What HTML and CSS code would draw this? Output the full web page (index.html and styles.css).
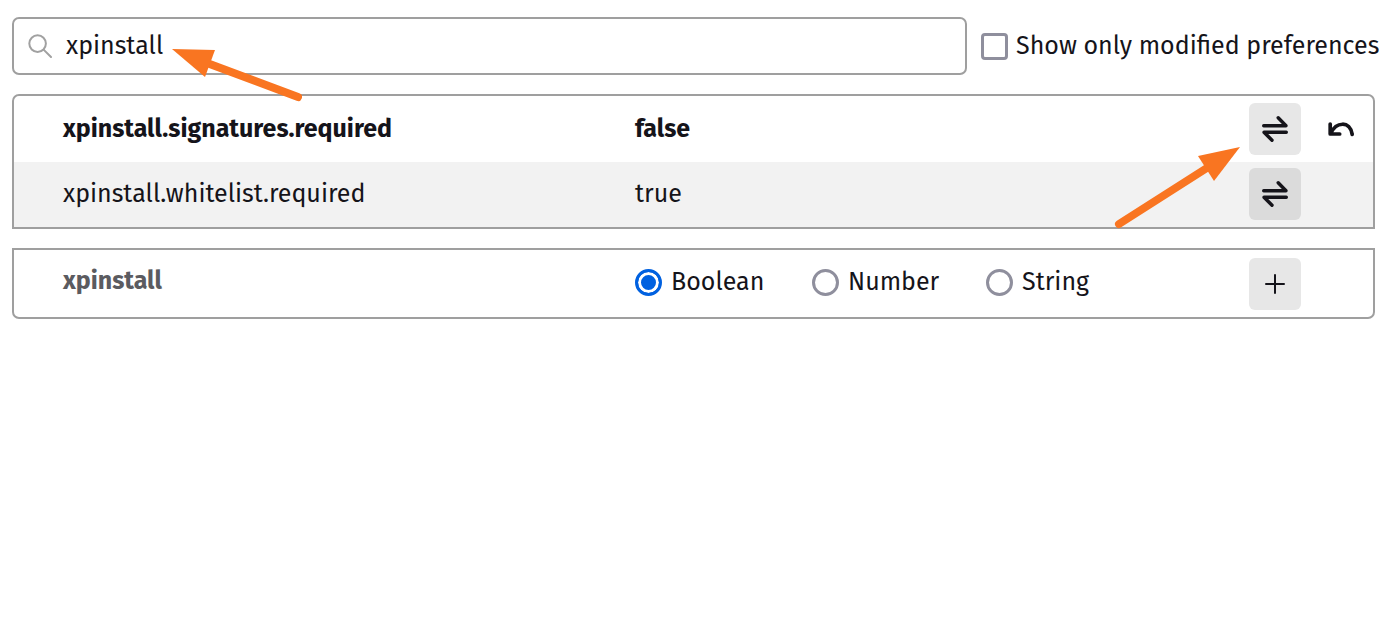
FILE: index.html
```html
<!DOCTYPE html>
<html lang="en">
<head>
<meta charset="utf-8">
<title>Advanced Preferences</title>
<link rel="stylesheet" href="styles.css">
</head>
<body>
<svg class="symbols" aria-hidden="true">
  <symbol id="toggle" viewBox="0 0 28 28">
    <path d="M2.7 10.8H25L17.2 2.8M25.3 17.2H3l8 8" fill="none" stroke="currentColor" stroke-width="3.4" stroke-linecap="round" stroke-linejoin="round"/>
  </symbol>
</svg>
<main class="page">
  <div class="toolbar">
    <div class="search">
      <svg class="search-icon" viewBox="0 0 24 24" aria-hidden="true"><circle cx="9.6" cy="9.6" r="8.3"/><path d="M15.6 15.6L23 23"/></svg>
      <input class="search-input" type="text" value="xpinstall" aria-label="Search preference name">
    </div>
    <label class="modified"><input class="checkbox" type="checkbox"><span>Show only modified preferences</span></label>
  </div>

  <table class="prefs results">
    <colgroup><col class="col-name"><col><col class="col-edit"><col class="col-reset"></colgroup>
    <tbody>
      <tr class="changed">
        <th scope="row">xpinstall.signatures.required</th>
        <td>false</td>
        <td><button class="action" aria-label="Toggle"><svg class="toggle-icon"><use href="#toggle"/></svg></button></td>
        <td><button class="action plain" aria-label="Reset"><svg class="reset-icon" viewBox="0 0 26 14"><path d="M2.2 2v10h9.5M2.8 11.4C8-.4 22-1.6 24.2 12.4"/></svg></button></td>
      </tr>
      <tr class="shaded">
        <th scope="row">xpinstall.whitelist.required</th>
        <td>true</td>
        <td><button class="action" aria-label="Toggle"><svg class="toggle-icon"><use href="#toggle"/></svg></button></td>
        <td></td>
      </tr>
    </tbody>
  </table>

  <table class="prefs new">
    <colgroup><col class="col-name"><col><col class="col-edit"><col class="col-reset"></colgroup>
    <tbody>
      <tr>
        <th scope="row">xpinstall</th>
        <td class="type-cell">
          <div class="types">
            <label class="type"><input class="radio" type="radio" name="type" checked><span>Boolean</span></label>
            <label class="type"><input class="radio" type="radio" name="type"><span>Number</span></label>
            <label class="type"><input class="radio" type="radio" name="type"><span>String</span></label>
          </div>
        </td>
        <td><button class="action" aria-label="Add"><svg class="add-icon" viewBox="0 0 20 20"><path d="M10 1v18M1 10h18"/></svg></button></td>
        <td></td>
      </tr>
    </tbody>
  </table>

  <svg class="pointer pointer-search" viewBox="0 0 130 56" aria-hidden="true"><path class="shaft" d="M35 17L126 51"/><path class="head" d="M0 3L43 4L33 31Z"/></svg>
  <svg class="pointer pointer-toggle" viewBox="0 0 126 84" aria-hidden="true"><path class="shaft" d="M5 78L96 20"/><path class="head" d="M126 1L84 10L100 35Z"/></svg>
</main>
</body>
</html>
```
FILE: styles.css
```css
* { box-sizing: border-box; }
body {
  margin: 0;
  background: #fff;
  color: #15141a;
  font: 25px/32px "Fira Sans", "Noto Sans", sans-serif;
}
.symbols { position: absolute; width: 0; height: 0; }
.page { position: relative; padding: 17px 16px 17px 12px; }
.toolbar { display: flex; align-items: center; gap: 14px; margin-bottom: 19px; }
.search {
  flex: 1;
  display: flex;
  align-items: center;
  gap: 14px;
  height: 58px;
  padding: 0 14px;
  border: 2px solid #9f9f9f;
  border-radius: 7px;
}
.search-icon { flex: none; width: 24px; height: 24px; fill: none; stroke: #a1a1a1; stroke-width: 2; stroke-linecap: round; }
.search-input { flex: 1; min-width: 0; padding: 0; border: 0; outline: 0; background: none; color: inherit; font: inherit; }
.modified { flex: 0 0 394px; min-width: 0; display: flex; align-items: center; gap: 8px; white-space: nowrap; }
.checkbox, .radio { appearance: none; flex: none; width: 27px; height: 27px; margin: 0; border: 3px solid #8f8f9d; background: #fff; }
.checkbox { border-radius: 4px; }
.radio { border-radius: 50%; }
.radio:checked { border-color: #0061e0; background: #0061e0; box-shadow: inset 0 0 0 3px #fff; }

.prefs { width: 100%; table-layout: fixed; border: 2px solid #9f9f9f; border-spacing: 0; }
.results { margin-bottom: 19px; border-radius: 7px 7px 0 0; }
.new { border-radius: 0 0 7px 7px; }
.col-name { width: 45.7%; }
.col-edit { width: 66px; }
.col-reset { width: 58px; }
.prefs th, .prefs td { padding: 7px 0; text-align: left; font-weight: 400; vertical-align: middle; }
.prefs .shaded th, .prefs .shaded td { padding-top: 6px; }
.prefs th { padding-left: 49px; }
.prefs .changed th, .prefs .changed td { font-weight: 700; }
.prefs.new td { padding-top: 8px; vertical-align: top; }
.prefs.new th { padding-top: 15px; font-weight: 700; color: #5b5b60; vertical-align: top; }
.prefs.new .type-cell { padding-top: 16px; }
.shaded { background: #f2f2f2; }

.action { display: flex; align-items: center; justify-content: center; width: 52px; height: 52px; padding: 0; border: 0; border-radius: 6px; background: #e7e7e7; color: #15141a; }
.shaded .action { background: #dbdbdb; }
.plain { background: none; }
.toggle-icon { width: 28px; height: 28px; }
.reset-icon { width: 26px; height: 14px; fill: none; stroke: currentColor; stroke-width: 3.7; stroke-linecap: round; stroke-linejoin: round; overflow: visible; }
.add-icon { width: 20px; height: 20px; fill: none; stroke: currentColor; stroke-width: 2; stroke-linecap: round; }
.types { display: grid; grid-template-columns: 177px 174px auto; }
.type { display: flex; align-items: center; gap: 9px; }

.pointer { position: absolute; pointer-events: none; }
.pointer-search { left: 172px; top: 46px; width: 130px; height: 56px; }
.pointer-toggle { right: 151px; top: 146px; width: 126px; height: 84px; }
.shaft { fill: none; stroke: #f97521; stroke-width: 8; stroke-linecap: round; }
.head { fill: #f97521; }
```
